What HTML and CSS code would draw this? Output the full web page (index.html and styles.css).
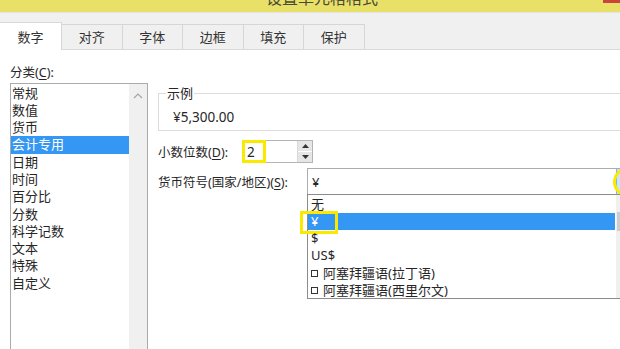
FILE: index.html
```html
<!DOCTYPE html>
<html>
  <head>
    <meta name="viewport" content="width=device-width, initial-scale=1" />
    <link rel="stylesheet" href="styles.css">
  </head>
  <body>
    <div class="titlebar">
      <span class="title">设置单元格格式</span>
      <span class="close"></span>
    </div>

    <div class="tabs">
      <div class="tab active">数字</div>
      <div class="tab">对齐</div>
      <div class="tab">字体</div>
      <div class="tab">边框</div>
      <div class="tab">填充</div>
      <div class="tab">保护</div>
    </div>

    <div class="content">
      <div class="left">
        <div class="label">分类(<u>C</u>):</div>
        <div class="listbox">
          <ul class="items">
            <li>常规</li>
            <li>数值</li>
            <li>货币</li>
            <li class="selected">会计专用</li>
            <li>日期</li>
            <li>时间</li>
            <li>百分比</li>
            <li>分数</li>
            <li>科学记数</li>
            <li>文本</li>
            <li>特殊</li>
            <li>自定义</li>
          </ul>
          <div class="scrollbar">
            <svg width="10" height="6" viewBox="0 0 10 6">
              <path d="M1 5 L5 1 L9 5" fill="none" stroke="#a6a6a6" stroke-width="1.2" />
            </svg>
          </div>
        </div>
      </div>

      <div class="right">
        <fieldset class="sample">
          <legend>示例</legend>
          <div class="sample-value">¥5,300.00</div>
        </fieldset>

        <div class="row decimals">
          <div class="row-label">小数位数(<u>D</u>):</div>
          <div class="spinner">
            <span class="spin-value">2</span>
            <div class="spin-buttons">
              <span class="spin-btn"><svg width="7" height="4" viewBox="0 0 7 4"><path d="M0 4 L3.5 0 L7 4 Z" fill="#333" /></svg></span>
              <span class="spin-btn"><svg width="7" height="4" viewBox="0 0 7 4"><path d="M0 0 L3.5 4 L7 0 Z" fill="#333" /></svg></span>
            </div>
            <span class="mark mark-spin"></span>
          </div>
        </div>

        <div class="row currency">
          <div class="row-label wide">货币符号(国家/地区)(<u>S</u>):</div>
          <div class="combo">
            <span class="combo-value">¥</span>
            <span class="combo-btn"></span>
            <span class="mark-circle"></span>
            <div class="dropdown">
              <ul class="options">
                <li>无</li>
                <li class="selected">¥<span class="mark mark-item"></span></li>
                <li>$</li>
                <li>US$</li>
                <li><span class="box"></span>阿塞拜疆语(拉丁语)</li>
                <li><span class="box"></span>阿塞拜疆语(西里尔文)</li>
              </ul>
              <div class="dd-scrollbar"><span class="thumb"></span></div>
            </div>
          </div>
        </div>
      </div>
    </div>
  </body>
</html>
```

FILE: styles.css
```css
* {
  box-sizing: border-box;
}
body {
  margin: 0;
  width: 620px;
  height: 349px;
  overflow: hidden;
  background: #fff;
  font-family: "Noto Sans", "Noto Sans CJK SC", sans-serif;
  font-size: 12.5px;
  color: #262626;
}
ul {
  list-style: none;
  margin: 0;
  padding: 0;
}
u {
  text-decoration-thickness: 1px;
  text-underline-offset: 2px;
}

/* Title bar (only the bottom edge is visible) */
.titlebar {
  height: 12px;
  overflow: hidden;
  background: #e9e068;
  display: flex;
  justify-content: center;
  position: relative;
}
.title {
  font-size: 16px;
  line-height: 16px;
  margin-top: -10px;
  margin-left: 24px;
  color: #4a4a3a;
}
.close {
  position: absolute;
  right: 0;
  top: 0;
  width: 17px;
  height: 3px;
  background: #c9443c;
}

/* Tabs */
.tabs {
  display: flex;
  align-items: flex-end;
  height: 38px;
  padding-top: 10px;
  background: #f0f0f0;
  border-top: 1px solid #e4e4e4;
  border-bottom: 1px solid #d9d9d9;
}
.tab {
  width: 61.5px;
  height: 25px;
  border: 1px solid #d6d6d6;
  border-bottom: none;
  margin-left: -1px;
  background: #f0f0f0;
  text-align: center;
  line-height: 24px;
  font-size: 13px;
  color: #333;
}
.tab.active {
  height: 28px;
  margin-bottom: -1px;
  width: 63px;
  background: #fff;
  line-height: 28px;
  border-color: #d9d9d9;
}

/* Main area */
.content {
  display: grid;
  grid-template-columns: 138px 480px;
  column-gap: 10px;
  padding: 15px 0 0 10px;
}
.label {
  line-height: 16px;
}
.listbox {
  margin-top: 2px;
  height: 266px;
  border: 1px solid #ababab;
  border-bottom: none;
  display: flex;
}
.items {
  flex: 1;
  padding-top: 0.5px;
}
.items li {
  height: 17.3px;
  line-height: 17.3px;
  padding-left: 1px;
  font-size: 13px;
}
.items li.selected {
  background: #3397f3;
  color: #fff;
}
.scrollbar {
  width: 18px;
  background: #f0f0f0;
  display: flex;
  justify-content: center;
  padding-top: 9px;
}
.scrollbar svg {
  display: block;
}

/* Right column */
.sample {
  margin: 20px 0 0 0;
  padding: 8px 0 5px 7px;
  border: 1px solid #dcdcdc;
  min-width: 0;
}
.sample legend {
  padding: 0 1px;
  line-height: 16px;
  font-size: 13px;
}
.sample-value {
  line-height: 16px;
  padding-left: 7px;
  font-size: 13.5px;
}

.row {
  display: flex;
  align-items: center;
}
.decimals {
  margin-top: 9px;
}
.currency {
  margin-top: 5px;
}
.row-label {
  width: 84px;
  white-space: nowrap;
}
.row-label.wide {
  width: 149px;
}

.spinner {
  position: relative;
  width: 71px;
  height: 23px;
  border: 1px solid #b4b4b4;
  display: flex;
  align-items: center;
  justify-content: space-between;
}
.spin-value {
  padding-left: 4px;
  font-size: 13.5px;
}
.spin-buttons {
  display: flex;
  flex-direction: column;
  gap: 1px;
  height: 21px;
  width: 15px;
  border-left: 1px solid #dadada;
}
.spin-btn {
  flex: 1;
  background: #e6e6e6;
  display: flex;
  align-items: center;
  justify-content: center;
}
.spin-btn svg {
  display: block;
}

/* Yellow highlight marks */
.mark {
  position: absolute;
  border: 3px solid #f9ea00;
}
.mark-spin {
  left: -1px;
  top: -1px;
  width: 24px;
  height: 23px;
}
.mark-item {
  left: -8px;
  top: -2px;
  width: 38px;
  height: 23px;
}
.mark-circle {
  position: absolute;
  left: 305px;
  top: -2px;
  width: 30px;
  height: 30px;
  border: 3px solid #f9ea00;
  border-radius: 50%;
}

.combo {
  position: relative;
  width: 327px;
  height: 27px;
  border: 1px solid #acacac;
  display: flex;
  align-items: center;
  justify-content: space-between;
}
.combo-value {
  padding-left: 4px;
  font-size: 13px;
}
.combo-btn {
  width: 17px;
  height: 25px;
  background: #cde4f7;
  border-left: 1px solid #7eb4ea;
}

.dropdown {
  position: absolute;
  top: 100%;
  left: -1px;
  width: 327px;
  height: 105px;
  border: 1px solid #8c8c8c;
  background: #fff;
  display: flex;
}
.options {
  flex: 1;
  padding-top: 0.5px;
}
.options li {
  position: relative;
  height: 17.3px;
  line-height: 17.3px;
  padding-left: 3px;
  white-space: nowrap;
  font-size: 13px;
}
.options li.selected {
  background: #3397f3;
  color: #fff;
  margin-right: 1px;
}
.box {
  display: inline-block;
  width: 7px;
  height: 7px;
  border: 1px solid #333;
  margin-right: 5px;
  vertical-align: 1px;
}
.dd-scrollbar {
  width: 17px;
  background: #f0f0f0;
  padding-top: 17px;
}
.thumb {
  display: block;
  margin-left: 1px;
  width: 15px;
  height: 19px;
  background: #cdcdcd;
}
```
